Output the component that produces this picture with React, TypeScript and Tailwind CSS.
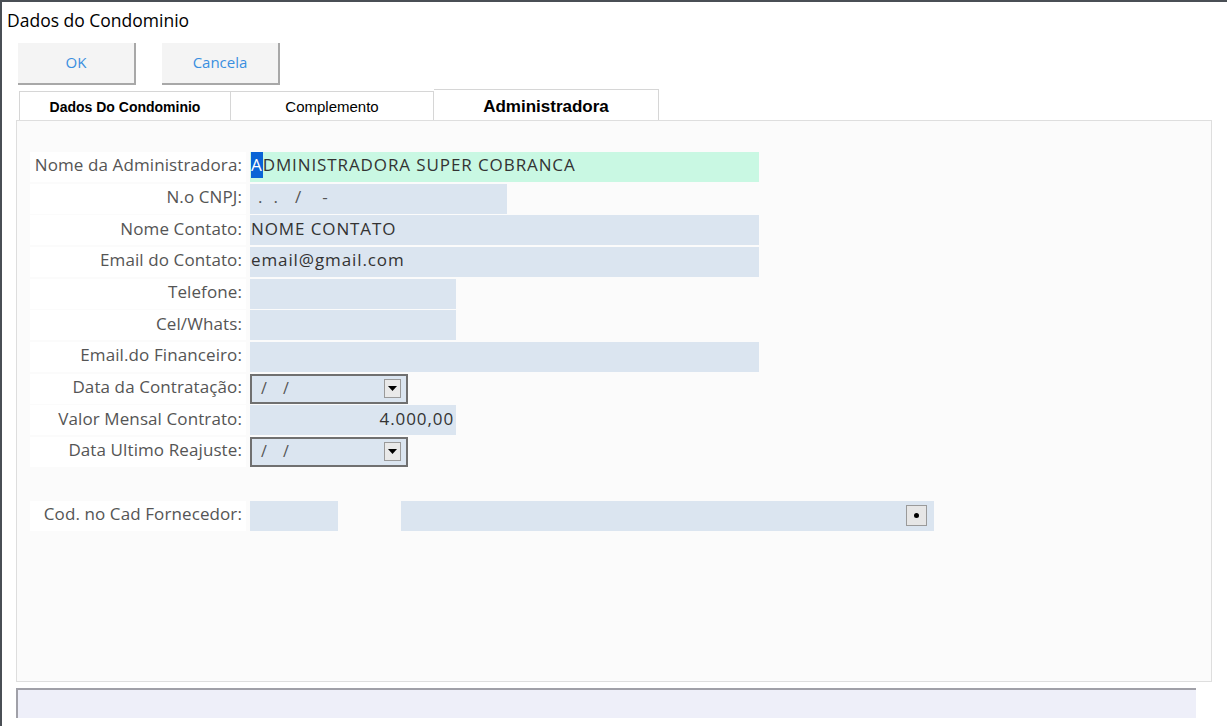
import React from 'react';

const FONT = { fontFamily: '"Open Sans", "Noto Sans", sans-serif' };

function Field({ w, green, children, right }: { w: string; green?: boolean; children?: React.ReactNode; right?: boolean }) {
  return (
    <div
      className={`${w} h-[30px] flex items-center pb-[4px] text-[17px] tracking-[0.9px] text-[#333] ${green ? 'bg-[#c9f8e3]' : 'bg-[#dbe5f0]'} ${right ? 'justify-end pr-[2px]' : 'pl-[1px]'}`}
    >
      {children}
    </div>
  );
}

function DateBox() {
  return (
    <div className="w-[158px] h-[30px] bg-[#dbe5f0] border-2 border-[#707070] flex items-center justify-between pl-[9px] pr-[5px]">
      <span className="text-[16px] text-[#555] tracking-[6px] pb-[2px]">/ /</span>
      <div className="w-[17px] h-[19px] bg-[#e9e9e9] border border-[#9a9a9a] flex items-center justify-center">
        <svg width="9" height="5" viewBox="0 0 9 5"><path d="M0 0h9L4.5 5z" fill="#000" /></svg>
      </div>
    </div>
  );
}

const ROWS: { label: string; field: React.ReactNode }[] = [
  {
    label: 'Nome da Administradora:',
    field: (
      <Field w="w-[509px]" green>
        <span className="bg-[#0a64d6] text-white">A</span>DMINISTRADORA SUPER COBRANCA
      </Field>
    ),
  },
  {
    label: 'N.o CNPJ:',
    field: (
      <Field w="w-[257px]">
        <span className="flex text-[#555] tracking-normal">
          <span className="ml-[7px]">.</span>
          <span className="ml-[11px]">.</span>
          <span className="ml-[17px]">/</span>
          <span className="ml-[21px]">-</span>
        </span>
      </Field>
    ),
  },
  { label: 'Nome Contato:', field: <Field w="w-[509px]">NOME CONTATO</Field> },
  { label: 'Email do Contato:', field: <Field w="w-[509px]">email@gmail.com</Field> },
  { label: 'Telefone:', field: <Field w="w-[206px]" /> },
  { label: 'Cel/Whats:', field: <Field w="w-[206px]" /> },
  { label: 'Email.do Financeiro:', field: <Field w="w-[509px]" /> },
  { label: 'Data da Contratação:', field: <DateBox /> },
  { label: 'Valor Mensal Contrato:', field: <Field w="w-[206px]" right>4.000,00</Field> },
  { label: 'Data Ultimo Reajuste:', field: <DateBox /> },
];

const LABEL =
  'ml-[13px] w-[216px] h-[30px] bg-white flex items-center justify-end pr-[4px] pb-[4px] text-[17px] text-[#555] tracking-[0.1px] whitespace-nowrap';

export default function App() {
  return (
    <div
      className="w-[1227px] h-[726px] bg-white border-l-2 border-t-2 border-[#4a4f55] overflow-hidden flex flex-col"
      style={FONT}
    >
      <div className="pl-[5px] pt-[8px] text-[17.5px] leading-5 text-black">Dados do Condominio</div>

      {/* buttons */}
      <div className="flex gap-[26px] pl-[16px] mt-[13px]">
        {['OK', 'Cancela'].map((b) => (
          <button
            key={b}
            className="w-[118px] h-[42px] bg-[#f4f4f4] border-r-2 border-b-2 border-[#a8a8a8] text-[15px] text-[#3a8fe0] pb-[2px]"
          >
            {b}
          </button>
        ))}
      </div>

      {/* tabs */}
      <div className="flex items-end pl-[17px] mt-[3px] h-[32px]" style={{ fontFamily: '"Liberation Sans", Arial, sans-serif' }}>
        <div className="w-[212px] h-[29px] border border-b-0 border-[#d6d6d6] bg-white flex items-center justify-center pt-[2px] text-[14px] text-black font-bold">
          Dados Do Condominio
        </div>
        <div className="w-[203px] h-[29px] border border-l-0 border-b-0 border-[#d6d6d6] bg-white flex items-center justify-center pt-[2px] text-[15px] text-black">
          Complemento
        </div>
        <div className="w-[225px] h-[31px] border border-l-0 border-b-0 border-[#d6d6d6] bg-white flex items-start pt-[4px] justify-center text-[17px] font-bold text-black">
          Administradora
        </div>
      </div>

      {/* panel */}
      <div className="ml-[14px] w-[1196px] h-[562px] bg-[#fbfbfb] border border-[#dedede] pt-[31px]">
        <div className="flex flex-col">
          {ROWS.map((r) => (
            <div key={r.label} className="flex h-[31.67px]">
              <div className={LABEL}>{r.label}</div>
              <div className="ml-[4px]">{r.field}</div>
            </div>
          ))}
        </div>

        <div className="flex mt-[32px] h-[30px]">
          <div className={LABEL}>Cod. no Cad Fornecedor:</div>
          <div className="ml-[4px]"><Field w="w-[88px]" /></div>
          <div className="ml-[63px] w-[533px] h-[30px] bg-[#dbe5f0] flex items-center justify-end pr-[7px]">
            <div className="w-[21px] h-[21px] bg-[#e6e6e6] border border-[#9a9a9a] flex items-center justify-center">
              <div className="w-[5px] h-[5px] rounded-full bg-black" />
            </div>
          </div>
        </div>
      </div>

      {/* status bar */}
      <div className="ml-[14px] mt-[6px] w-[1180px] h-[30px] bg-[#eeeff9] border-t-2 border-l-2 border-[#a0a0a8]" />
    </div>
  );
}
